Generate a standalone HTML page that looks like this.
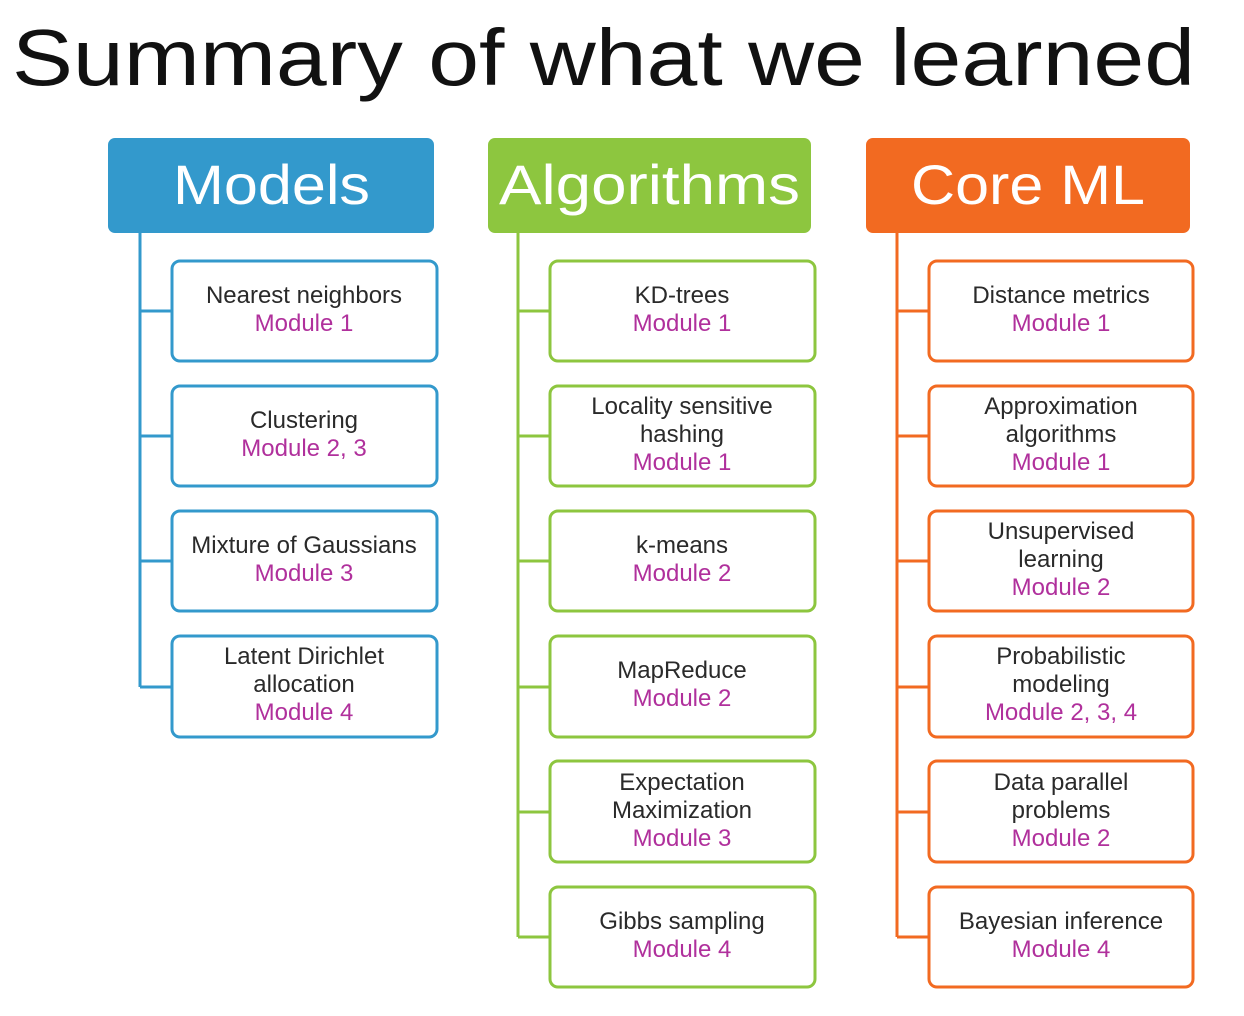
<!DOCTYPE html>
<html><head><meta charset="utf-8"><style>
html,body{margin:0;padding:0;background:#fff;}
svg{display:block}
text{font-family:"Liberation Sans",sans-serif;}
.t{font-size:24px;fill:#2a2a2a;text-anchor:middle}
.m{font-size:24px;fill:#b0309c;text-anchor:middle}
.h{font-size:56px;fill:#fff}
</style></head><body>
<svg width="1244" height="1016" viewBox="0 0 1244 1016" xmlns="http://www.w3.org/2000/svg">
<text x="12" y="85" font-size="80" fill="#111" textLength="1183" lengthAdjust="spacingAndGlyphs">Summary of what we learned</text>

<!-- Models -->
<rect x="108" y="138" width="326" height="95" rx="7" fill="#3399cc"/>
<text class="h" x="173" y="204" textLength="197" lengthAdjust="spacingAndGlyphs">Models</text>
<path d="M140 233V687M140 311H172M140 436H172M140 561H172M140 687H172" stroke="#3399cc" stroke-width="3" fill="none"/>
<g fill="#fff" stroke="#3399cc" stroke-width="3">
<rect x="172" y="261" width="265" height="100" rx="8"/>
<rect x="172" y="386" width="265" height="100" rx="8"/>
<rect x="172" y="511" width="265" height="100" rx="8"/>
<rect x="172" y="636" width="265" height="101" rx="8"/>
</g>
<text class="t" x="304" y="303">Nearest neighbors</text><text class="m" x="304" y="331">Module 1</text>
<text class="t" x="304" y="428">Clustering</text><text class="m" x="304" y="456">Module 2, 3</text>
<text class="t" x="304" y="553">Mixture of Gaussians</text><text class="m" x="304" y="581">Module 3</text>
<text class="t" x="304" y="664">Latent Dirichlet</text><text class="t" x="304" y="692">allocation</text><text class="m" x="304" y="720">Module 4</text>

<!-- Algorithms -->
<rect x="488" y="138" width="323" height="95" rx="7" fill="#8dc63f"/>
<text class="h" x="499" y="204" textLength="301" lengthAdjust="spacingAndGlyphs">Algorithms</text>
<path d="M518 233V937M518 311H550M518 436H550M518 561H550M518 687H550M518 812H550M518 937H550" stroke="#8dc63f" stroke-width="3" fill="none"/>
<g fill="#fff" stroke="#8dc63f" stroke-width="3">
<rect x="550" y="261" width="265" height="100" rx="8"/>
<rect x="550" y="386" width="265" height="100" rx="8"/>
<rect x="550" y="511" width="265" height="100" rx="8"/>
<rect x="550" y="636" width="265" height="101" rx="8"/>
<rect x="550" y="761" width="265" height="101" rx="8"/>
<rect x="550" y="887" width="265" height="100" rx="8"/>
</g>
<text class="t" x="682" y="303">KD-trees</text><text class="m" x="682" y="331">Module 1</text>
<text class="t" x="682" y="414">Locality sensitive</text><text class="t" x="682" y="442">hashing</text><text class="m" x="682" y="470">Module 1</text>
<text class="t" x="682" y="553">k-means</text><text class="m" x="682" y="581">Module 2</text>
<text class="t" x="682" y="678">MapReduce</text><text class="m" x="682" y="706">Module 2</text>
<text class="t" x="682" y="790">Expectation</text><text class="t" x="682" y="818">Maximization</text><text class="m" x="682" y="846">Module 3</text>
<text class="t" x="682" y="929">Gibbs sampling</text><text class="m" x="682" y="957">Module 4</text>

<!-- Core ML -->
<rect x="866" y="138" width="324" height="95" rx="7" fill="#f26a21"/>
<text class="h" x="911" y="204" textLength="234" lengthAdjust="spacingAndGlyphs">Core ML</text>
<path d="M897 233V937M897 311H929M897 436H929M897 561H929M897 687H929M897 812H929M897 937H929" stroke="#f26a21" stroke-width="3" fill="none"/>
<g fill="#fff" stroke="#f26a21" stroke-width="3">
<rect x="929" y="261" width="264" height="100" rx="8"/>
<rect x="929" y="386" width="264" height="100" rx="8"/>
<rect x="929" y="511" width="264" height="100" rx="8"/>
<rect x="929" y="636" width="264" height="101" rx="8"/>
<rect x="929" y="761" width="264" height="101" rx="8"/>
<rect x="929" y="887" width="264" height="100" rx="8"/>
</g>
<text class="t" x="1061" y="303">Distance metrics</text><text class="m" x="1061" y="331">Module 1</text>
<text class="t" x="1061" y="414">Approximation</text><text class="t" x="1061" y="442">algorithms</text><text class="m" x="1061" y="470">Module 1</text>
<text class="t" x="1061" y="539">Unsupervised</text><text class="t" x="1061" y="567">learning</text><text class="m" x="1061" y="595">Module 2</text>
<text class="t" x="1061" y="664">Probabilistic</text><text class="t" x="1061" y="692">modeling</text><text class="m" x="1061" y="720">Module 2, 3, 4</text>
<text class="t" x="1061" y="790">Data parallel</text><text class="t" x="1061" y="818">problems</text><text class="m" x="1061" y="846">Module 2</text>
<text class="t" x="1061" y="929">Bayesian inference</text><text class="m" x="1061" y="957">Module 4</text>
</svg>
</body></html>
